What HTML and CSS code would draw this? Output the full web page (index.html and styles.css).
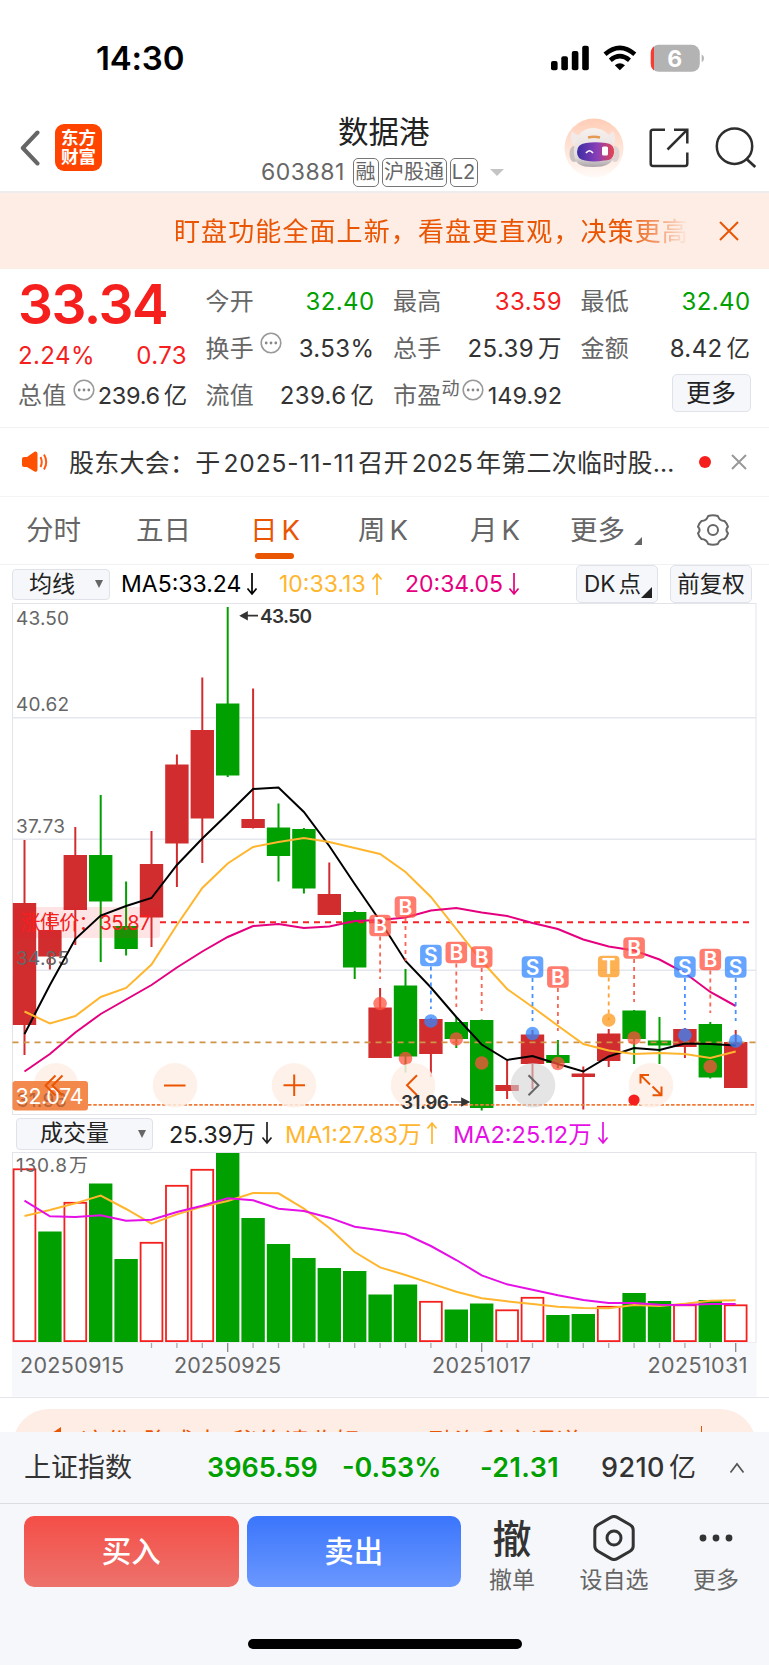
FILE: index.html
```
<!DOCTYPE html>
<html lang="zh-CN">
<head>
    <meta charset="UTF-8">
    <meta name="viewport" content="width=device-width, initial-scale=1.0">
    <title>数据港 603881</title>
    <link rel="stylesheet" href="styles.css">
</head>
<body>
    <svg width="0" height="0" class="defs">
        <symbol id="down" viewBox="0 0 12 24"><path d="M6 1V22M1.500 16.500L6 22L10.500 16.500" fill="none" stroke="currentColor" stroke-width="1.700"/></symbol>
        <symbol id="up" viewBox="0 0 12 24"><path d="M6 23V2M1.500 7.500L6 2L10.500 7.500" fill="none" stroke="currentColor" stroke-width="1.700"/></symbol>
        <symbol id="info" viewBox="0 0 22 22"><circle cx="11" cy="11" r="9.800" fill="none" stroke="#999" stroke-width="1.600"/><circle cx="6.200" cy="11" r="1.400" fill="#888"/><circle cx="11" cy="11" r="1.400" fill="#888"/><circle cx="15.800" cy="11" r="1.400" fill="#888"/></symbol>
    </svg>

    <div class="status">
        <span class="clock">14:30</span>
        <svg class="signals" width="154" height="28" viewBox="551 43 154 28">
            <rect x="551" y="60" width="6.6" height="9.3" rx="2"/>
            <rect x="561.3" y="55.3" width="6.6" height="14" rx="2"/>
            <rect x="571.8" y="50" width="6.6" height="19.3" rx="2"/>
            <rect x="582.2" y="44.8" width="6.6" height="24.5" rx="2"/>
            <g fill="none" stroke="#000" stroke-width="4.6">
                <path d="M605 53.2Q619.8 40.5 634.8 53.2"/>
                <path d="M610.3 59.2Q619.8 51.2 629.5 59.2"/>
            </g>
            <path d="M614.8 64.2Q619.8 60.2 625 64.2L619.8 69.3Z"/>
            <rect x="650.8" y="43.8" width="49" height="27" rx="8" fill="#b3b3b3"/>
            <path d="M654 45.5Q650.8 48 650.8 52V62.5Q650.8 67 654 69.4Z" fill="#fb3a30"/>
            <path d="M701.7 53.5Q704 54.5 704 57.3Q704 60 701.7 61Z" fill="#b3b3b3"/>
            <text x="674.6" y="65.6" text-anchor="middle" class="battery">6</text>
        </svg>
    </div>

    <header>
        <svg class="back" width="22" height="36" viewBox="0 0 22 36"><path d="M18.5 2.500L3.800 18L18.500 33.500" fill="none" stroke="#666" stroke-width="4" stroke-linecap="round" stroke-linejoin="round"/></svg>
        <div class="logo">东方<br>财富</div>
        <div class="title">
            <h1>数据港</h1>
            <div class="code"><span class="num">603881</span><i>融</i><i class="wide">沪股通</i><i class="l2">L2</i><b></b></div>
        </div>
        <svg class="robot" width="60" height="60" viewBox="0 0 60 60">
            <defs>
                <linearGradient id="rbg" x1="0" y1="0" x2="0" y2="1"><stop offset="0" stop-color="#ffcdb6"/><stop offset="1" stop-color="#fffaf7"/></linearGradient>
                <linearGradient id="face" x1="0" y1="0" x2="1" y2="0"><stop offset="0" stop-color="#3b2da4"/><stop offset=".55" stop-color="#8a3fb8"/><stop offset="1" stop-color="#e8434e"/></linearGradient>
                <linearGradient id="head" x1="0" y1="0" x2="0" y2="1"><stop offset="0" stop-color="#f6f1ef"/><stop offset=".75" stop-color="#e2dbdb"/><stop offset="1" stop-color="#a9a2a8"/></linearGradient>
            </defs>
            <circle cx="30" cy="30" r="29.5" fill="url(#rbg)"/>
            <path d="M8 13Q4 22 11 28L20 18Q12 18 8 13ZM49 13Q54 22 48 28L39 17Q46 18 49 13Z" fill="#f2eae8"/>
            <ellipse cx="10" cy="36" rx="4.500" ry="8" fill="#c9c0c0"/>
            <ellipse cx="51" cy="36" rx="4.500" ry="8" fill="#ddd4d3"/>
            <path d="M29 10C44 10 51 24 50 36C49 46 42 49 29 49S11 46 10 36C9 24 15 10 29 10Z" fill="url(#head)"/>
            <path d="M24 19.500Q30 18 36 19.500" stroke="#e59a54" stroke-width="2.500" fill="none"/>
            <path d="M22 25Q31 23.500 42 25Q51 26 50 35Q49 43 40 42.500Q30 44.500 21 42.500Q13 41.500 13 34Q13 26 22 25Z" fill="url(#face)"/>
            <path d="M22 35Q25.500 30.500 29 35" stroke="#fff" stroke-width="1.700" fill="none"/>
            <rect x="38" y="28.500" width="6" height="9" rx="1.500" fill="#fff"/>
        </svg>
        <svg class="share" width="40" height="40" viewBox="0 0 40 40"><path d="M16 1.700H4Q1.700 1.700 1.700 4V35.500Q1.700 38 4 38H36Q38.300 38 38.300 35.500V24.500M25 1.700H38.300V15.500M38.300 1.700L18.500 21.500" fill="none" stroke="#2e2e2e" stroke-width="2.500"/></svg>
        <svg class="search" width="42" height="42" viewBox="0 0 42 42"><circle cx="19.500" cy="19.200" r="17.700" fill="none" stroke="#2e2e2e" stroke-width="2.500"/><path d="M31 31.500L40.300 40" stroke="#2e2e2e" stroke-width="2.800"/></svg>
    </header>

    <div class="banner">
        <p>盯盘功能全面上新，看盘更直观，决策更高效</p>
        <svg width="20" height="20" viewBox="0 0 20 20"><path d="M1 1L19 19M19 1L1 19" stroke="#ea5504" stroke-width="2"/></svg>
    </div>

    <section class="quote">
        <div class="col first">
            <div class="price">33.34</div>
            <div class="item red"><span>2.24%</span><span>0.73</span></div>
            <div class="item tight"><label>总值</label><svg class="info far" width="22" height="22"><use href="#info"/></svg><span>239.6<em>亿</em></span></div>
        </div>
        <div class="col">
            <div class="item"><label>今开</label><span class="green">32.40</span></div>
            <div class="item"><label>换手</label><svg class="info gap" width="22" height="22"><use href="#info"/></svg><span>3.53%</span></div>
            <div class="item"><label>流值</label><span>239.6<em>亿</em></span></div>
        </div>
        <div class="col">
            <div class="item"><label>最高</label><span class="red">33.59</span></div>
            <div class="item"><label>总手</label><span>25.39<em>万</em></span></div>
            <div class="item tight"><label>市盈<sup>动</sup></label><svg class="info" width="22" height="22"><use href="#info"/></svg><span>149.92</span></div>
        </div>
        <div class="col">
            <div class="item"><label>最低</label><span class="green">32.40</span></div>
            <div class="item"><label>金额</label><span>8.42<em>亿</em></span></div>
            <button class="more">更多</button>
        </div>
    </section>

    <div class="notice">
        <svg width="26" height="22" viewBox="0 0 26 22"><path d="M0 8Q0 6 2 6H5L12.500 .800Q15.500 -.500 15.500 3V18.500Q15.500 21.500 12.500 20.500L5 16H2Q0 16 0 14Z" fill="#ff5000"/><path d="M18.500 6Q21 11 18.500 16M22 3.500Q26.500 11 22 18.500" fill="none" stroke="#ff5a10" stroke-width="2"/></svg>
        <p>股东大会：于<span class="day">2025-11-11</span>召开<span>2025</span>年第二次临时股…</p>
        <i></i>
        <svg class="close" width="16" height="16" viewBox="0 0 16 16"><path d="M1 1L15 15M15 1L1 15" stroke="#999" stroke-width="2"/></svg>
    </div>

    <nav>
        <a>分时</a><a>五日</a><a class="on">日<span>K</span></a><a>周<span>K</span></a><a>月<span>K</span></a><a>更多<svg width="8" height="8"><path d="M8 0V8H0Z" fill="#666"/></svg></a>
        <svg class="gear" width="34" height="32" viewBox="-17 -16 34 32"><path d="M-4.800 -14Q0 -15.500 4.800 -14Q6.500 -9.200 11.500 -9Q14.200 -6.500 15 -3.200Q11.800 0 15 3.200Q14.200 6.500 11.500 9Q6.500 9.200 4.800 14Q0 15.500 -4.800 14Q-6.500 9.200 -11.500 9Q-14.200 6.500 -15 3.200Q-11.800 0 -15 -3.200Q-14.200 -6.500 -11.500 -9Q-6.500 -9.200 -4.800 -14Z" fill="none" stroke="#666" stroke-width="2" stroke-linejoin="round"/><circle r="5" fill="none" stroke="#666" stroke-width="2"/></svg>
    </nav>

    <div class="bar ma">
        <div class="select">均线<small></small></div>
        <span class="m1">MA5:33.24<svg width="12" height="24"><use href="#down"/></svg></span>
        <span class="m2">10:33.13<svg width="12" height="24"><use href="#up"/></svg></span>
        <span class="m3">20:34.05<svg width="12" height="24"><use href="#down"/></svg></span>
        <button class="dk">DK<em>点</em></button>
        <button class="fq">前复权</button>
    </div>
    <svg id="kline" width="769" height="512" viewBox="0 603 769 512"></svg>

    <div class="bar vol">
        <div class="select">成交量<small></small></div>
        <span class="v1">25.39万<svg width="12" height="24"><use href="#down"/></svg></span>
        <span class="v2">MA1:27.83万<svg width="12" height="24"><use href="#up"/></svg></span>
        <span class="v3">MA2:25.12万<svg width="12" height="24"><use href="#down"/></svg></span>
    </div>
    <svg id="volume" width="769" height="246" viewBox="0 1152 769 246"></svg>

    <div class="promo">
        <div class="pill"><svg width="12" height="14" viewBox="0 0 12 14"><path d="M0 6L9 0V14H6V5Z" fill="#ea5504"/></svg><p>这份“降成本”秘籍请收好：VIP融资利率通道</p><b></b></div>
    </div>

    <div class="index">
        <span class="name">上证指数</span>
        <span class="g p">3965.59</span>
        <span class="g c">-0.53%</span>
        <span class="g d">-21.31</span>
        <span class="amt">9210<em>亿</em></span>
        <svg width="16" height="12" viewBox="0 0 16 12"><path d="M1.500 10.500L8 2L14.500 10.500" fill="none" stroke="#555" stroke-width="1.700"/></svg>
    </div>

    <footer>
        <div class="actions">
            <button class="buy">买入</button>
            <button class="sell">卖出</button>
            <div class="act a1"><strong>撤</strong><span>撤单</span></div>
            <div class="act a2"><svg width="44" height="46" viewBox="-22 -23 44 46"><path d="M-3.200 -20.600Q0 -22.400 3.200 -20.600L16 -13.300Q19.200 -11.500 19.200 -8V8Q19.200 11.500 16 13.300L3.200 20.600Q0 22.400 -3.200 20.600L-16 13.300Q-19.200 11.500 -19.200 8V-8Q-19.200 -11.500 -16 -13.300Z" fill="none" stroke="#333" stroke-width="3"/><circle r="7" fill="none" stroke="#333" stroke-width="3"/></svg><span>设自选</span></div>
            <div class="act a3"><svg width="34" height="46" viewBox="-17 -23 34 46"><circle cx="-13" r="3.400"/><circle r="3.400"/><circle cx="13" r="3.400"/></svg><span>更多</span></div>
        </div>
        <div class="home"></div>
    </footer>

    <script>
        const RED = '#d12c2e', GREEN = '#00a000';
        const x = i => 24.5 + i * 25.4;

        // color, high, body top, body bottom, low
        const candles = [
            ['r', 840, 903, 1025, 1055], ['r', 912, 930, 956.5, 969.5], ['r', 827, 855, 910, 945],
            ['g', 795, 855, 901.5, 962], ['g', 881.5, 926, 949, 955.5], ['r', 831, 864, 917.5, 947],
            ['r', 754.5, 764.5, 843.5, 887], ['r', 677.5, 730, 818.5, 863], ['g', 607, 703.5, 775.5, 777],
            ['r', 688.5, 819, 828, 828.5], ['g', 803.5, 827.5, 856, 881.5], ['g', 828, 829, 888.5, 893.5],
            ['r', 862.5, 894, 915, 915], ['g', 911, 912, 967.5, 979], ['r', 988, 1007.5, 1058, 1058],
            ['g', 969, 985.5, 1056.5, 1072.5], ['r', 1018, 1019, 1054, 1077], ['g', 1017, 1022, 1039, 1048],
            ['g', 1019.5, 1020, 1108, 1110.5], ['r', 1060.5, 1085, 1091, 1099], ['r', 1030, 1034.5, 1064, 1089],
            ['g', 1040, 1055, 1063, 1068], ['r', 1066.5, 1073.5, 1077, 1109.5], ['r', 1029, 1033.5, 1061, 1067],
            ['g', 1010, 1010.5, 1039, 1064], ['g', 1017, 1040.5, 1045.5, 1064], ['r', 1028, 1029, 1047, 1058],
            ['g', 1022, 1024, 1077.5, 1078.5], ['r', 1030, 1042, 1088, 1088]
        ];
        const ma5 = [1034, 985, 939, 915.5, 906, 898, 865, 838.5, 814, 789, 787.5, 812, 846, 884, 921, 961, 987.5, 1017, 1044.5, 1060, 1056, 1064, 1071.5, 1056.5, 1048, 1050, 1043.5, 1044, 1045.5];
        const ma10 = [1011.5, 1023.5, 1016, 997, 988, 964.5, 925, 888, 863.5, 847, 842, 838, 842, 848, 854, 872, 897, 929, 961, 989, 1007, 1025.7, 1044, 1050.5, 1054, 1053, 1054, 1058, 1051.5];
        const ma20 = [1071.5, 1054, 1032.5, 1014, 999.5, 985, 967.5, 951.5, 937, 926, 924, 928, 926.5, 921, 920, 917.5, 910.5, 908, 912.5, 916, 923, 929, 939.5, 946.5, 950.5, 959.5, 973, 992, 1006];
        // index, letter, badge y, dash end, dot y
        const marks = [
            [14, 'B', 925.5, 979, 1003.5], [15, 'B', 907, 961, 1058.5], [16, 'S', 955.5, 1009, 1021],
            [17, 'B', 952.5, 1007, 1039], [18, 'B', 957, 1011, 1063], [20, 'S', 967, 1021, 1033.5],
            [21, 'B', 977, 1031, 1063.5], [23, 'T', 966.5, 1020, 1020], [24, 'B', 948, 1002, 1038],
            [26, 'S', 967, 1020, 1035], [27, 'B', 959.5, 1013, 1066.5], [28, 'S', 967, 1021, 1041]
        ];
        const markColor = { B: '#ff5340', S: '#3487ff', T: '#fd981d' };

        const rect = (x, y, w, h, more) => `<rect x="${x}" y="${y}" width="${w}" height="${h}" ${more}/>`;
        const line = (x1, y1, x2, y2, more) => `<line x1="${x1}" y1="${y1}" x2="${x2}" y2="${y2}" ${more}/>`;
        const text = (x, y, s, w, cls) => `<text x="${x}" y="${y}" textLength="${w}" class="${cls}">${s}</text>`;
        const poly = (ys, color) => `<polyline points="${ys.map((y, i) => x(i) + ',' + y).join(' ')}" fill="none" stroke="${color}" stroke-width="2"/>`;

        function drawKline() {
            let s = rect(12.5, 603.5, 743.5, 511, 'fill="#fff" stroke="#e2e4ea"');
            [717.7, 839.2, 970.2].forEach(y => s += line(12, y, 756, y, 'stroke="#e4e7ee" stroke-width="1.5"'));
            candles.forEach((c, i) => {
                const color = c[0] == 'r' ? RED : GREEN;
                s += line(x(i), c[1], x(i), c[4], `stroke="${color}" stroke-width="2"`);
                s += rect(x(i) - 11.7, c[2], 23.4, c[3] - c[2], `fill="${color}"`);
            });
            s += text(16, 624.5, '43.50', 53, 'axis') + text(16, 710.5, '40.62', 53, 'axis');
            s += text(16, 833, '37.73', 49, 'axis') + text(16, 965, '34.85', 53, 'axis');
            s += rect(13, 907, 147, 31, 'rx="3" fill="#f5202a" fill-opacity=".12"');
            s += text(20.5, 929.5, '涨停价：', 78, 'limit') + text(99.5, 929.5, '35.87', 51, 'limit');
            s += line(160, 922.2, 753, 922.2, 'stroke="#f52228" stroke-width="1.9" stroke-dasharray="6 5"');
            s += line(12.5, 1042.4, 756, 1042.4, 'stroke="#cf9448" stroke-width="1.8" stroke-dasharray="6 5"');
            s += poly(ma5, '#000') + poly(ma10, '#ffb62e') + poly(ma20, '#e4007f');
            marks.forEach(m => {
                const c = markColor[m[1]], cx = x(m[0]);
                s += line(cx, m[2] + 11, cx, m[3], `stroke="${c}" stroke-width="1.8" stroke-dasharray="4 4" opacity=".9"`);
                s += `<circle cx="${cx}" cy="${m[4]}" r="6.8" fill="${c}" opacity=".75"/>`;
                s += rect(cx - 10.8, m[2] - 10.8, 21.6, 21.6, `rx="4" fill="${c}" opacity=".76"`);
                s += `<text x="${cx}" y="${m[2] + 7.6}" text-anchor="middle" class="mark">${m[1]}</text>`;
            });
            s += line(88, 1104.8, 754, 1104.8, 'stroke="#f07a35" stroke-width="1.8" stroke-dasharray="3.5 1.8"');
            [56, 175, 294, 413, 533, 651].forEach(cx => {
                s += `<circle cx="${cx}" cy="1085.3" r="22.3" fill="${cx == 533 ? '#d3d3d5' : '#feeee5'}" opacity="${cx == 533 ? .6 : .85}"/>`;
            });
            s += rect(12.5, 1081, 75.5, 29.5, 'rx="3" fill="#f27c3a" opacity=".9"');
            s += text(16.5, 1107, '31.96', 50, 'axis faint') + text(15.5, 1103.5, '32.074', 68, 'tag');
            s += `<g fill="none" stroke="#ea5504" stroke-width="2">
                <path d="M55.500 1075.500L45.500 1085.500L55.500 1095.500M62.500 1075.500L52.500 1085.500L62.500 1095.500"/>
                <path d="M164 1085.500H185.500M283.500 1085.300H305M294.200 1074.500V1096"/>
                <path d="M417 1075.300L407 1085.300L417 1095.300"/>
                <path d="M640.500 1083.500V1075H649M640.500 1075L650 1084.500M652.500 1095.200H661.500V1086.500M661.500 1095.200L652.500 1086.500"/>
            </g>`;
            s += '<path d="M528.500 1075.300L538.500 1085.300L528.500 1095.300" fill="none" stroke="#666" stroke-width="2"/>';
            s += '<circle cx="634" cy="1100" r="5.6" fill="#f5201e"/>';
            s += text(260, 622.5, '43.50', 52, 'peak') + text(401, 1109, '31.96', 48, 'peak');
            s += '<path d="M246 615.700H258M247 612.500L241 615.700L247 619ZM451 1102H463M462 1098.700L468.500 1102L462 1105.300Z" fill="#333" stroke="#333" stroke-width="1.700"/>';
            document.getElementById('kline').innerHTML = s;
        }

        const bars = [
            ['r', 1168.5], ['g', 1231.5], ['r', 1202], ['g', 1183.5], ['g', 1259], ['r', 1242], ['r', 1185], ['r', 1169],
            ['g', 1153], ['g', 1218], ['g', 1244], ['g', 1258], ['g', 1268], ['g', 1271], ['g', 1294.5], ['g', 1284.5],
            ['r', 1301], ['g', 1309.5], ['g', 1303.5], ['r', 1309.5], ['r', 1297], ['g', 1315], ['g', 1314], ['r', 1306],
            ['g', 1293], ['g', 1301], ['r', 1304.5], ['g', 1300], ['r', 1304.5]
        ];
        const vma1 = [318, 300, 280, 257, 297, 341, 313, 290, 273, 249, 250, 296, 354, 426, 472, 495, 520, 545, 565, 574, 582, 590, 594, 595, 585, 588, 581, 572, 571];
        const vma2 = [272, 319, 321, 316, 332, 329, 306, 287, 265, 271, 296, 303, 323, 350, 361, 373, 408, 450, 496, 523, 539, 556, 570, 579, 579, 584, 585, 582, 582];

        function drawVolume() {
            let s = rect(12.5, 1152.5, 743.5, 190, 'fill="#fff" stroke="#e2e4ea"');
            s += rect(12, 1342.5, 744.5, 54, 'fill="#f7f8fb"');
            bars.forEach((b, i) => {
                if (b[0] == 'g') s += rect(x(i) - 11.7, b[1], 23.4, 1342 - b[1], `fill="${GREEN}"`);
                else s += rect(x(i) - 10.9, b[1] + .8, 21.8, 1340.3 - b[1], 'fill="#fff" stroke="#f5201e" stroke-width="1.8"');
                if (i > 4) s += line(x(i), 1343, x(i), i % 10 == 8 ? 1352 : 1348, `stroke="${i % 10 == 8 ? '#888' : '#aaa'}" stroke-width="1.3"`);
            });
            s += text(16, 1171.5, '130.8', 51, 'axis') + text(69, 1171.5, '万', 19, 'axis');
            s += poly(vma1.map(v => 1110 + v / 3), '#ffb62e') + poly(vma2.map(v => 1110 + v / 3), '#e510e5');
            s += text(20, 1373, '20250915', 104, 'date') + text(174, 1373, '20250925', 107, 'date');
            s += text(432, 1373, '20251017', 99, 'date') + text(647.5, 1373, '20251031', 100, 'date');
            s += line(0, 1397.5, 769, 1397.5, 'stroke="#e4e5ea"');
            document.getElementById('volume').innerHTML = s;
        }

        drawKline();
        drawVolume();
    </script>
</body>
</html>
```
FILE: styles.css
```
* {
    box-sizing: border-box;
}

body {
    margin: 0;
    width: 769px;
    height: 1665px;
    overflow: hidden;
    display: flex;
    flex-direction: column;
    background: #fff;
    color: #333;
    font-family: Inter, "Noto Sans CJK SC", sans-serif;
    font-size: 24px;
}

body > * {
    flex: none;
}

svg {
    display: block;
    flex: none;
}

.defs {
    position: absolute;
}

i, em {
    font-style: normal;
}

p, h1 {
    margin: 0;
    font-weight: 400;
}

button {
    padding: 0;
    font-family: inherit;
    color: #222;
    background: #f6f7fa;
    border: 1.5px solid #dfe2e8;
    border-radius: 5px;
}

.red {
    color: #f5201e;
}

.green {
    color: #00a000;
}

/* status bar */
.status {
    height: 115px;
    padding: 0 64px 0 96px;
    display: flex;
    align-items: center;
    justify-content: space-between;
    color: #000;
}

.clock {
    font-size: 33px;
    font-weight: 600;
    letter-spacing: -0.2px;
    line-height: 40px;
}

.battery {
    font-size: 23px;
    font-weight: 700;
    fill: #fff;
}

/* header */
header {
    height: 78px;
    padding-left: 19px;
    display: flex;
    border-bottom: 2px solid #ededef;
}

.back {
    margin-top: 15px;
}

.logo {
    width: 47px;
    height: 47px;
    margin: 9px 0 0 14px;
    padding-top: 4px;
    border-radius: 9px;
    background: #ff4400;
    color: #fff;
    font-size: 17.5px;
    font-weight: 700;
    line-height: 19px;
    text-align: center;
}

.title {
    width: 250px;
    margin-left: 159px;
}

h1 {
    margin-left: 77px;
    font-size: 30.5px;
    line-height: 34px;
    color: #222;
}

.code {
    margin-top: 8px;
    display: flex;
    align-items: center;
    color: #666;
}

.code .num {
    width: 91.5px;
    font-size: 23px;
    letter-spacing: 0.5px;
    line-height: 30px;
}

.code i {
    width: 26px;
    height: 29px;
    margin-right: 3px;
    border: 1.5px solid #777;
    border-radius: 5px;
    font-size: 20px;
    line-height: 26px;
    text-align: center;
    white-space: nowrap;
}

.code .wide {
    width: 65px;
}

.code .l2 {
    width: 28px;
}

.code b {
    margin-left: 9px;
    border: 7px solid transparent;
    border-top: 7px solid #c4c4c4;
    border-bottom: 0;
}

.robot {
    margin: 3px 0 0 53px;
}

.share {
    margin: 13px 0 0 24.5px;
}

.search {
    margin: 12px 0 0 26.5px;
}

/* banner */
.banner {
    height: 76px;
    padding-left: 174px;
    display: flex;
    align-items: center;
    background: #fdede5;
}

.banner p {
    width: 515px;
    margin-top: -4px;
    overflow: hidden;
    white-space: nowrap;
    color: #ea5504;
    font-size: 26px;
    letter-spacing: 1.1px;
    -webkit-mask-image: linear-gradient(90deg, #000 455px, transparent 515px);
    mask-image: linear-gradient(90deg, #000 455px, transparent 515px);
}

.banner svg {
    margin-left: 30px;
}

/* quote */
.quote {
    height: 159px;
    padding: 9px 18px 0 18px;
    display: grid;
    grid-template-columns: 169px 169px 169px 170px;
    column-gap: 18.5px;
    border-bottom: 1.5px solid #f1f2f4;
}

.price {
    height: 54px;
    font-size: 55px;
    font-weight: 600;
    line-height: 53px;
    letter-spacing: -1.5px;
    color: #f5201e;
}

.item {
    height: 47px;
    display: flex;
    align-items: center;
    line-height: 47px;
    letter-spacing: 0.4px;
    white-space: nowrap;
}

.first .price + .item {
    height: 40px;
    padding-top: 6px;
}

.item span:last-child {
    margin-left: auto;
}

.item label {
    color: #666;
    letter-spacing: 0.3px;
}

.item em {
    margin-left: 4px;
    font-size: 23.5px;
}

.tight span {
    font-size: 23.5px;
    letter-spacing: 0;
}

.item sup {
    font-size: 18px;
    line-height: 0;
    vertical-align: 9px;
}

.info {
    margin: -12px 0 0 2px;
}

.gap, .far {
    margin-left: 6px;
}

.far + span {
    letter-spacing: -0.3px;
}

.more {
    display: block;
    width: 79px;
    height: 38px;
    margin: 2px 0 0 auto;
    font-size: 25px;
    line-height: 34px;
}

/* notice */
.notice {
    height: 69px;
    padding-left: 22px;
    display: flex;
    align-items: center;
    border-bottom: 1.5px solid #f4f5f7;
}

.notice p {
    width: 630px;
    margin: -2px 0 0 21px;
    font-size: 25px;
    letter-spacing: 0.25px;
    white-space: nowrap;
}

.notice p span {
    margin: 0 3px;
    font-size: 24.5px;
    letter-spacing: 0.3px;
}

.notice p .day {
    letter-spacing: 0.9px;
}

.notice i {
    width: 12px;
    height: 12px;
    border-radius: 50%;
    background: #f5201e;
}

.close {
    margin-left: 20px;
}

/* period tabs */
nav {
    height: 68px;
    padding-left: 26px;
    display: grid;
    grid-template-columns: 110px 114px 108px 112px 100px 126px 34px;
    border-bottom: 1.5px solid #f0f1f3;
    color: #666;
    font-size: 27.5px;
    line-height: 66px;
}

nav a {
    position: relative;
    white-space: nowrap;
}

nav a span {
    margin-left: 4px;
}

nav .on {
    color: #ea5504;
}

nav .on::after {
    content: "";
    position: absolute;
    left: 5px;
    top: 55.5px;
    width: 39px;
    height: 6px;
    border-radius: 3px;
    background: #ea5504;
}

nav a svg {
    display: inline-block;
    margin-left: 9px;
    vertical-align: -5px;
}

.gear {
    margin-top: 17px;
}

/* indicator rows */
.bar {
    height: 38px;
    display: flex;
    align-items: center;
    font-size: 23px;
    white-space: nowrap;
}

.bar span {
    display: flex;
    align-items: center;
    letter-spacing: 0;
}

.bar span svg {
    margin-left: 5px;
}

.select {
    height: 31px;
    display: flex;
    align-items: center;
    justify-content: space-between;
    background: #f6f7fa;
    border: 1.5px solid #dfe2e8;
    border-radius: 4px;
    color: #222;
    line-height: 27px;
}

.select small {
    border: 4.5px solid transparent;
    border-top: 8px solid #666;
    border-bottom: 0;
}

.ma .select {
    width: 98px;
    margin-left: 12px;
    padding: 0 6px 0 16px;
}

.m1 {
    width: 158px;
    margin-left: 11px;
    color: #000;
}

.m2 {
    width: 126px;
    color: #ffb62e;
}

.m3 {
    width: 171px;
    color: #e4007f;
}

.bar button {
    width: 82px;
    height: 38px;
    font-size: 22.5px;
    line-height: 34px;
    white-space: nowrap;
}

.dk {
    position: relative;
    padding-right: 9px;
}

.dk em {
    margin-left: 3px;
}

.dk::after {
    content: "";
    position: absolute;
    right: 5px;
    bottom: 4px;
    border-left: 11px solid transparent;
    border-bottom: 11px solid #222;
}

.fq {
    margin-left: 12px;
}

.vol {
    height: 37px;
}

.vol .select {
    width: 137px;
    height: 32px;
    margin-left: 16px;
    padding: 0 6px 0 23px;
}

.vol span {
    margin-top: -2px;
    font-size: 23.5px;
    letter-spacing: 0;
}

.v1 {
    width: 116px;
    margin-left: 16px;
    color: #222;
}

.v2 {
    width: 168px;
    color: #ffb62e;
}

.v3 {
    color: #e510e5;
}

/* chart text */
.axis {
    font-size: 19px;
    fill: #666;
}

.faint {
    fill: #b5633a;
}

.limit {
    font-size: 20px;
    fill: #f5201e;
}

.mark {
    font-size: 21px;
    font-weight: 600;
    fill: #fff;
}

.tag {
    font-size: 21.5px;
    fill: #fff;
}

.peak {
    font-size: 19px;
    font-weight: 600;
    fill: #333;
}

.date {
    font-size: 21.5px;
    fill: #666;
}

/* promo, partly under the index bar */
.promo {
    height: 34px;
    padding: 11px 13px 0;
    overflow: hidden;
}

.pill {
    height: 72px;
    padding: 18px 54px 0 39px;
    display: flex;
    border-radius: 36px;
    background: #fdede5;
    color: #ea5504;
    font-size: 24.5px;
    line-height: 30px;
}

.pill p {
    margin-left: 17px;
    letter-spacing: 1.1px;
    white-space: nowrap;
}

.pill b {
    width: 1.5px;
    height: 20px;
    margin-left: auto;
    margin-top: -1px;
    background: #ea5504;
}

/* index bar */
.index {
    height: 72px;
    padding-left: 24px;
    display: flex;
    align-items: center;
    background: #f6f7fa;
    border-bottom: 1.5px solid #dcdde1;
    font-size: 27px;
    line-height: 70px;
    white-space: nowrap;
}

.index .name {
    width: 183px;
}

.g {
    color: #00a000;
    font-weight: 600;
}

.p {
    width: 135px;
}

.c {
    width: 138px;
}

.d {
    width: 121px;
    letter-spacing: 0.4px;
}

.amt {
    width: 128px;
    font-weight: 500;
    letter-spacing: 0.4px;
}

.amt em {
    margin-left: 4px;
    font-weight: 400;
}

/* bottom actions */
footer {
    height: 162px;
    background: #f6f7fa;
}

.actions {
    height: 100px;
    padding: 12px 0 0 24px;
    display: flex;
}

.actions button {
    width: 214.5px;
    height: 71px;
    padding-bottom: 5px;
    border: 0;
    border-radius: 10px;
    color: #fff;
    font-size: 29.5px;
    font-weight: 500;
}

.buy {
    background: linear-gradient(#f44e47, #ed726c);
}

.sell {
    margin-left: 8px;
    background: linear-gradient(#3a75fb, #6b98ff);
}

.act {
    display: flex;
    flex-direction: column;
    align-items: center;
    white-space: nowrap;
    color: #666;
    font-size: 23px;
    line-height: 36px;
}

.act strong {
    color: #333;
    font-size: 39px;
    font-weight: 500;
    line-height: 46px;
}

.act svg {
    fill: #333;
    margin-top: -1px;
    margin-bottom: 1px;
}

.a1 {
    width: 46px;
    margin-left: 28px;
}

.a2 {
    width: 70px;
    margin-left: 44px;
}

.a3 {
    width: 46px;
    margin-left: 44px;
}

.home {
    width: 274px;
    height: 10px;
    margin: 35px auto 0;
    border-radius: 5px;
    background: #000;
}
```
